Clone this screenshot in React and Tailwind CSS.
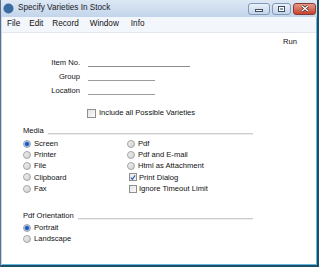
import React from 'react'

const Radio = ({ checked }) => (
  <span className="w-[8px] h-[8px] shrink-0 rounded-full border border-[#a3a3a3] bg-linear-to-br from-[#f2f2f2] to-[#cfcfcf] flex items-center justify-center">
    {checked && <span className="w-[4px] h-[4px] rounded-full bg-[#1f56b8] ring-1 ring-[#8fb4e8]" />}
  </span>
);

const Check = ({ checked, size = "w-[9px] h-[9px]" }) => (
  <span className={`${size} shrink-0 border border-[#8e8f8f] bg-linear-to-br from-[#e4e4e4] to-[#fbfbfb] flex items-center justify-center`}>
    {checked && (
      <svg width="7" height="7" viewBox="0 0 7 7">
        <path d="M1 3.6 L2.8 5.6 L6 1" fill="none" stroke="#2554b0" strokeWidth="1.3" />
      </svg>
    )}
  </span>
);

const Option = ({ label, radio = true, checked = false }) => (
  <div className="h-[11.25px] flex items-center">
    {radio ? (
      <Radio checked={checked} />
    ) : (
      <span className="ml-[2px] flex"><Check checked={checked} size="w-[8px] h-[8px]" /></span>
    )}
    <span className={radio ? "ml-[3px]" : "ml-[2px]"}>{label}</span>
  </div>
);

const Section = ({ title }) => (
  <div className="flex items-center w-[230px] h-[10px] leading-[10px]">
    <span>{title}</span>
    <div className="flex-1 ml-[4px] mt-[5px] h-[2px] border-t border-[#cdcdcd] border-b border-b-[#ededed]" />
  </div>
);

const WinButton = ({ className, children }) => (
  <div className={`h-[12px] rounded-[3px] border flex items-center justify-center ${className}`}>
    {children}
  </div>
);

export default function App() {
  return (
    <div className="w-[319px] h-[267px] flex flex-col bg-[#c6d8ed] border-l border-l-[#5e7189] border-r-2 border-r-[#1d4f68] border-b-2 border-b-[#1d4f68] overflow-hidden font-['Liberation_Sans',Arial,sans-serif] text-[7.6px] text-[#111]">
      {/* title bar */}
      <div className="h-[17px] shrink-0 flex items-center pl-[2px] pr-[1px] bg-linear-to-b from-[#dde8f5] to-[#c3d5eb]">
        <svg width="11" height="11" viewBox="0 0 11 11">
          <circle cx="5.5" cy="5.5" r="5" fill="#3a6ca3" />
          <path d="M3 2.5 A3.4 3.4 0 1 0 8.6 6.8 A2.6 2.6 0 1 1 3 2.5 Z" fill="#ffffff" />
        </svg>
        <span className="ml-[4px] text-[8.2px] text-[#1b1b1b]">Specify Varieties In Stock</span>
        <div className="ml-auto flex items-center gap-[2px]">
          <WinButton className="w-[22px] border-[#8199b8] bg-linear-to-b from-[#e9f0f8] to-[#c4d4e8]">
            <span className="mt-[4px] w-[8px] h-[3px] bg-white border border-[#3d4d60]" />
          </WinButton>
          <WinButton className="w-[19px] border-[#8199b8] bg-linear-to-b from-[#e9f0f8] to-[#c4d4e8]">
            <span className="w-[7px] h-[6px] border border-[#3d4d60] bg-white flex items-center justify-center">
              <span className="w-[3px] h-[2px] bg-[#8a9bb0]" />
            </span>
          </WinButton>
          <WinButton className="w-[23px] border-[#8a3a2e] bg-linear-to-b from-[#e79a88] to-[#c4402f]">
            <svg width="8" height="7" viewBox="0 0 8 7">
              <path d="M1 1 L7 6 M7 1 L1 6" stroke="#3a1a14" strokeWidth="2.6" />
              <path d="M1 1 L7 6 M7 1 L1 6" stroke="#ffffff" strokeWidth="1.4" />
            </svg>
          </WinButton>
        </div>
      </div>

      {/* client */}
      <div className="flex-1 ml-[1px] bg-white flex flex-col border-r border-b border-[#64b9dd]">
        {/* menu */}
        <div className="h-[16px] shrink-0 flex items-center pl-[5px] bg-[#f3f6fb] border-b border-[#e2e7ee] text-[8.2px]">
          <span>File</span>
          <span className="ml-[9px]">Edit</span>
          <span className="ml-[9px]">Record</span>
          <span className="ml-[11px]">Window</span>
          <span className="ml-[12px]">Info</span>
        </div>

        <div className="flex justify-end pr-[19px] pt-[4px] leading-[10px]">Run</div>

        <div className="mt-[9px] grid grid-cols-[78px_auto] gap-x-[8px] items-start">
          <div className="h-[14px] leading-[14px] text-right">Item No.</div>
          <div className="w-[102px] h-[11px] border-b border-[#8c8c8c]" />
          <div className="h-[14px] leading-[14px] text-right">Group</div>
          <div className="w-[67px] h-[11px] border-b border-[#9c9c9c]" />
          <div className="h-[14px] leading-[14px] text-right">Location</div>
          <div className="w-[67px] h-[11px] border-b border-[#9c9c9c]" />
        </div>

        <div className="mt-[10px] pl-[85px] flex items-center h-[10px]">
          <Check />
          <span className="ml-[3px]">Include all Possible Varieties</span>
        </div>

        <div className="mt-[8px] pl-[21px]">
          <Section title="Media" />
          <div className="mt-[2px] grid grid-cols-[104px_auto]">
            <div>
              <Option label="Screen" checked />
              <Option label="Printer" />
              <Option label="File" />
              <Option label="Clipboard" />
              <Option label="Fax" />
            </div>
            <div>
              <Option label="Pdf" />
              <Option label="Pdf and E-mail" />
              <Option label="Html as Attachment" />
              <Option label="Print Dialog" radio={false} checked />
              <Option label="Ignore Timeout Limit" radio={false} />
            </div>
          </div>

          <div className="mt-[17px]">
            <Section title="Pdf Orientation" />
          </div>
          <div className="mt-[1px]">
            <Option label="Portrait" checked />
            <Option label="Landscape" />
          </div>
        </div>
      </div>
    </div>
  );
}
